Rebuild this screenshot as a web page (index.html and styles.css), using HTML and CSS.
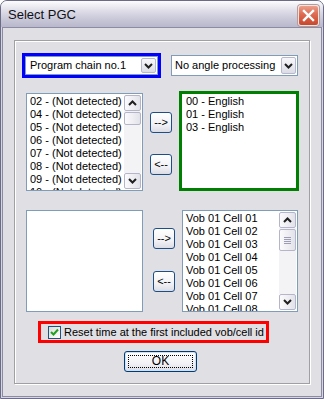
FILE: index.html
```html
<!DOCTYPE html>
<html>
<head>
<meta charset="utf-8">
<link rel="stylesheet" href="styles.css">
</head>
<body>
<div class="window">
  <div class="titlebar">
    <span class="title">Select PGC</span>
    <div class="close">
      <svg width="13" height="13" viewBox="0 0 13 13"><path d="M2 2 L11 11 M11 2 L2 11" stroke="#fff" stroke-width="2.4" stroke-linecap="square"/></svg>
    </div>
  </div>
  <div class="client">
    <div class="group">
      <div class="row row1">
        <div class="hl-blue">
          <div class="combo combo-pgc">
            <span class="combo-text">Program chain no.1</span>
            <span class="dd"><svg width="9" height="6" viewBox="0 0 9 6"><path d="M1 1 L4.5 4.5 L8 1" fill="none" stroke="#202020" stroke-width="2"/></svg></span>
          </div>
        </div>
        <div class="combo combo-angle">
          <span class="combo-text">No angle processing</span>
          <span class="dd"><svg width="9" height="6" viewBox="0 0 9 6"><path d="M1 1 L4.5 4.5 L8 1" fill="none" stroke="#202020" stroke-width="2"/></svg></span>
        </div>
      </div>

      <div class="row row2">
        <div class="list list-tl">
          <div class="items">
            <div class="item">02 - (Not detected)</div>
            <div class="item">04 - (Not detected)</div>
            <div class="item">05 - (Not detected)</div>
            <div class="item">06 - (Not detected)</div>
            <div class="item">07 - (Not detected)</div>
            <div class="item">08 - (Not detected)</div>
            <div class="item">09 - (Not detected)</div>
            <div class="item">10 - (Not detected)</div>
          </div>
          <div class="sb">
            <div class="sb-btn"><svg width="9" height="6" viewBox="0 0 9 6"><path d="M1 5 L4.5 1.5 L8 5" fill="none" stroke="#202020" stroke-width="2"/></svg></div>
            <div class="sb-track">
              <div class="sb-thumb thumb-small"></div>
            </div>
            <div class="sb-btn"><svg width="9" height="6" viewBox="0 0 9 6"><path d="M1 1 L4.5 4.5 L8 1" fill="none" stroke="#202020" stroke-width="2"/></svg></div>
          </div>
        </div>
        <div class="btns btns-top">
          <div class="btn arrow-btn">--&gt;</div>
          <div class="btn arrow-btn">&lt;--</div>
        </div>
        <div class="hl-green">
          <div class="item">00 - English</div>
          <div class="item">01 - English</div>
          <div class="item">03 - English</div>
        </div>
      </div>

      <div class="row row3">
        <div class="list list-bl"></div>
        <div class="btns btns-bottom">
          <div class="btn arrow-btn">--&gt;</div>
          <div class="btn arrow-btn">&lt;--</div>
        </div>
        <div class="list list-br">
          <div class="items">
            <div class="item">Vob 01 Cell 01</div>
            <div class="item">Vob 01 Cell 02</div>
            <div class="item">Vob 01 Cell 03</div>
            <div class="item">Vob 01 Cell 04</div>
            <div class="item">Vob 01 Cell 05</div>
            <div class="item">Vob 01 Cell 06</div>
            <div class="item">Vob 01 Cell 07</div>
            <div class="item">Vob 01 Cell 08</div>
          </div>
          <div class="sb">
            <div class="sb-btn"><svg width="9" height="6" viewBox="0 0 9 6"><path d="M1 5 L4.5 1.5 L8 5" fill="none" stroke="#202020" stroke-width="2"/></svg></div>
            <div class="sb-track">
              <div class="sb-thumb thumb-big">
                <span class="grip"></span><span class="grip"></span><span class="grip"></span><span class="grip"></span>
              </div>
            </div>
            <div class="sb-btn"><svg width="9" height="6" viewBox="0 0 9 6"><path d="M1 1 L4.5 4.5 L8 1" fill="none" stroke="#202020" stroke-width="2"/></svg></div>
          </div>
        </div>
      </div>

      <div class="row row4">
        <div class="hl-red">
          <span class="check">
            <svg width="9" height="9" viewBox="0 0 9 9"><path d="M1 4 L3.5 6.5 L8 1.5" fill="none" stroke="#21a121" stroke-width="2"/></svg>
          </span>
          <span class="check-label">Reset time at the first included vob/cell id</span>
        </div>
      </div>

      <div class="row row5">
        <div class="btn ok-btn"><span class="focus">OK</span></div>
      </div>
    </div>
  </div>
</div>
</body>
</html>
```

FILE: styles.css
```css
html, body {
  margin: 0;
  padding: 0;
  background: #ffffff;
}

body {
  font-family: "Liberation Sans", Arial, sans-serif;
  font-size: 11px;
  color: #000;
}

.window {
  width: 324px;
  height: 399px;
  box-sizing: border-box;
  border: 1px solid #6c6c89;
  border-radius: 7px 7px 0 0;
  background: #d6d6e2;
  display: flex;
  flex-direction: column;
  overflow: hidden;
}

.titlebar {
  height: 26px;
  flex: none;
  display: flex;
  justify-content: space-between;
  align-items: flex-start;
  padding: 0 4px 0 7px;
  background: linear-gradient(to bottom, #fdfdfe 0%, #eeeef3 18%, #d9d8e4 45%, #c6c5d6 75%, #b9b8cc 100%);
}

.title {
  font-size: 13px;
  line-height: 24px;
  padding-top: 2px;
  color: #101018;
}

.close {
  width: 19px;
  height: 19px;
  margin-top: 4px;
  border: 1px solid #f4e4e0;
  border-radius: 3px;
  background: linear-gradient(to bottom, #eaa08c 0%, #df6f56 40%, #d2563b 75%, #c6482f 100%);
  display: flex;
  align-items: center;
  justify-content: center;
  box-shadow: 0 0 0 1px #b59a9a;
}

.client {
  flex: 1;
  margin: 0 1px 1px;
  border: 1px solid #8b8ba3;
  background: #e0dfe3;
}

.group {
  margin: 12px 0 0 11px;
  width: 296px;
  height: 344px;
  box-sizing: border-box;
  border: 1px solid #a0a0a4;
  box-shadow: inset 1px 1px 0 #ffffff, 1px 1px 0 #ffffff;
}

.row {
  display: flex;
  align-items: flex-start;
}

.row1 {
  margin-top: 12px;
  height: 25px;
  align-items: center;
}

.hl-blue {
  margin-left: 7px;
  width: 139px;
  height: 25px;
  box-sizing: border-box;
  border: 3px solid #0000ff;
}

.combo {
  box-sizing: border-box;
  border: 1px solid #7f9db9;
  background: #fff;
  display: flex;
  align-items: center;
  justify-content: space-between;
}

.combo-pgc {
  width: 133px;
  height: 19px;
  padding: 0 1px 0 4px;
}

.combo-angle {
  margin-left: 10px;
  width: 127px;
  height: 21px;
  padding: 0 1px 0 3px;
}

.combo-text {
  font-size: 11px;
  line-height: 13px;
  white-space: nowrap;
}

.dd {
  width: 15px;
  align-self: stretch;
  margin: 1px 0;
  box-sizing: border-box;
  border: 1px solid #b8b8cc;
  border-radius: 2px;
  background: linear-gradient(to bottom, #f8f8fb, #dcdce6);
  display: flex;
  align-items: center;
  justify-content: center;
}

.row2 {
  margin-top: 13px;
  height: 100px;
}

.list {
  box-sizing: border-box;
  border: 1px solid #7f9db9;
  background: #fff;
  display: flex;
  overflow: hidden;
}

.items {
  flex: 1;
  padding: 1px 0 0 3px;
  overflow: hidden;
}

.item {
  line-height: 13px;
  white-space: nowrap;
}

.list-tl {
  margin: 2px 0 0 11px;
  width: 117px;
  height: 98px;
}

.sb {
  width: 17px;
  flex: none;
  display: flex;
  flex-direction: column;
  padding: 1px 1px 1px 0;
}

.sb-btn {
  height: 16px;
  flex: none;
  box-sizing: border-box;
  border: 1px solid #b5b5c9;
  border-radius: 2px;
  background: linear-gradient(to right, #fbfbfd, #e2e2ea);
  display: flex;
  align-items: center;
  justify-content: center;
}

.sb-track {
  flex: 1;
  background: #f3f3f6;
  padding: 1px 0;
  display: flex;
  flex-direction: column;
}

.sb-thumb {
  box-sizing: border-box;
  border: 1px solid #b5b5c9;
  border-radius: 2px;
  background: linear-gradient(to right, #fbfbfd, #e2e2ea);
  display: flex;
  flex-direction: column;
  align-items: center;
  justify-content: center;
  gap: 1px;
}

.thumb-small {
  height: 13px;
}

.thumb-big {
  height: 22px;
}

.grip {
  width: 7px;
  height: 1px;
  background: #9c9cb4;
}

.btns {
  display: flex;
  flex-direction: column;
}

.btn {
  box-sizing: border-box;
  border: 1px solid #1c4f86;
  border-radius: 3px;
  background: linear-gradient(to bottom, #ffffff 0%, #f2f2f6 60%, #dcdce6 100%);
  display: flex;
  align-items: center;
  justify-content: center;
  font-size: 11px;
  line-height: 13px;
}

.arrow-btn {
  width: 22px;
  height: 21px;
}

.btns-top {
  margin: 21px 0 0 7px;
  gap: 21px;
}

.hl-green {
  margin-left: 7px;
  width: 120px;
  height: 100px;
  box-sizing: border-box;
  border: 3px solid #008000;
  background: #fff;
  padding: 1px 0 0 4px;
}

.row3 {
  margin-top: 19px;
  height: 102px;
}

.list-bl {
  margin-left: 11px;
  width: 117px;
  height: 102px;
}

.btns-bottom {
  margin: 18px 0 0 10px;
  gap: 22px;
}

.list-br {
  margin-left: 7px;
  width: 116px;
  height: 102px;
}

.row4 {
  margin-top: 9px;
}

.hl-red {
  margin-left: 23px;
  width: 231px;
  height: 22px;
  box-sizing: border-box;
  border: 3px solid #ff0000;
  display: flex;
  align-items: center;
  padding-left: 7px;
  gap: 3px;
}

.check {
  width: 13px;
  height: 13px;
  box-sizing: border-box;
  border: 1px solid #1c5180;
  background: linear-gradient(135deg, #dcdcd7, #ffffff);
  display: flex;
  align-items: center;
  justify-content: center;
}

.check-label {
  font-size: 11px;
  line-height: 13px;
  white-space: nowrap;
}

.row5 {
  margin-top: 8px;
}

.ok-btn {
  margin-left: 109px;
  width: 73px;
  height: 21px;
  border-color: #003c74;
  box-shadow: inset 0 0 0 1px #cfe0f7;
  padding: 3px;
}

.focus {
  flex: 1;
  align-self: stretch;
  border: 1px dotted #000;
  display: flex;
  align-items: center;
  justify-content: center;
  font-size: 12px;
}
```
